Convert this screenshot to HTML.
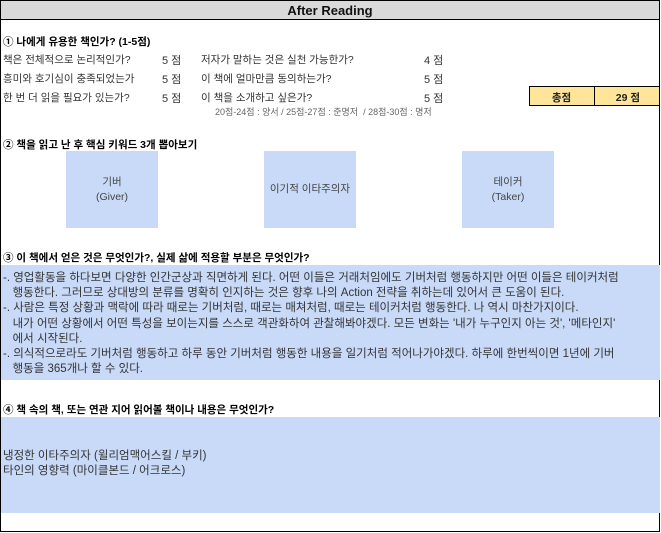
<!DOCTYPE html>
<html><head><meta charset="utf-8"><style>
*{margin:0;padding:0;box-sizing:border-box}
body{width:661px;height:533px;background:#fff;font-family:"Liberation Sans","Noto Sans CJK KR",sans-serif;font-size:11px;color:#333;position:relative;overflow:hidden}
.frame{position:absolute;left:0;top:0;width:660px;height:532px;border:1px solid #000}
.title{position:absolute;left:0;top:0;width:660px;height:20px;background:#d9d9d9;border:1px solid #000;text-align:center;font-weight:bold;font-size:13px;line-height:19px;color:#111}
.a{position:absolute;white-space:nowrap}
.h{color:#000;font-weight:bold;font-size:10.5px}
.box{position:absolute;background:#c9daf8;text-align:center;display:flex;align-items:center;justify-content:center;font-size:10.5px;color:#444;line-height:15px}
.band{position:absolute;left:1px;width:659px;background:#c9daf8}
</style></head><body>
<div class="frame"></div>
<div class="title">After Reading</div>
<div class="a h" style="left:3px;top:34px">① 나에게 유용한 책인가? (1-5점)</div>
<div class="a" style="left:3px;top:52px;font-size:10.5px">책은 전체적으로 논리적인가?</div>
<div class="a" style="left:162px;top:52px">5 점</div>
<div class="a" style="left:201px;top:52px;font-size:10.5px">저자가 말하는 것은 실천 가능한가?</div>
<div class="a" style="left:424px;top:52px">4 점</div>
<div class="a" style="left:3px;top:71px;font-size:10.5px">흥미와 호기심이 충족되었는가</div>
<div class="a" style="left:162px;top:71px">5 점</div>
<div class="a" style="left:201px;top:71px;font-size:10.5px">이 책에 얼마만큼 동의하는가?</div>
<div class="a" style="left:424px;top:71px">5 점</div>
<div class="a" style="left:3px;top:90px;font-size:10.5px">한 번 더 읽을 필요가 있는가?</div>
<div class="a" style="left:162px;top:90px">5 점</div>
<div class="a" style="left:201px;top:90px;font-size:10.5px">이 책을 소개하고 싶은가?</div>
<div class="a" style="left:424px;top:90px">5 점</div>
<div class="a" style="left:215px;top:105px;font-size:9px;color:#666">20점-24점 : 양서 / 25점-27점 : 준명저 &nbsp;/ 28점-30점 : 명저</div>
<div class="a" style="left:529px;top:86px;width:131px;height:20px;background:#ffe599;border:1px solid #000"></div>
<div class="a" style="left:594px;top:86px;width:1px;height:20px;background:#000"></div>
<div class="a" style="left:529px;top:90px;width:65px;text-align:center;font-weight:bold;font-size:10.5px;color:#222">총점</div>
<div class="a" style="left:595px;top:90px;width:45px;text-align:right;font-weight:bold;font-size:10.5px;color:#222">29 점</div>
<div class="a h" style="left:3px;top:137px">② 책을 읽고 난 후 핵심 키워드 3개 뽑아보기</div>
<div class="box" style="left:66px;top:151px;width:92px;height:77px">기버<br>(Giver)</div>
<div class="box" style="left:264px;top:151px;width:92px;height:77px">이기적 이타주의자</div>
<div class="box" style="left:462px;top:151px;width:92px;height:77px">테이커<br>(Taker)</div>
<div class="a h" style="left:3px;top:250px">③ 이 책에서 얻은 것은 무엇인가?, 실제 삶에 적용할 부분은 무엇인가?</div>
<div class="band" style="top:265px;height:115px"></div>
<div class="a" style="left:3px;top:271px;line-height:15.2px;font-size:11.5px">-. 영업활동을 하다보면 다양한 인간군상과 직면하게 된다. 어떤 이들은 거래처임에도 기버처럼 행동하지만 어떤 이들은 테이커처럼<br>&nbsp;&nbsp;&nbsp;행동한다. 그러므로 상대방의 분류를 명확히 인지하는 것은 향후 나의 Action 전략을 취하는데 있어서 큰 도움이 된다.<br>-. 사람은 특정 상황과 맥락에 따라 때로는 기버처럼, 때로는 매쳐처럼, 때로는 테이커처럼 행동한다. 나 역시 마찬가지이다.<br>&nbsp;&nbsp;&nbsp;내가 어떤 상황에서 어떤 특성을 보이는지를 스스로 객관화하여 관찰해봐야겠다. 모든 변화는 '내가 누구인지 아는 것', '메타인지'<br>&nbsp;&nbsp;&nbsp;에서 시작된다.<br>-. 의식적으로라도 기버처럼 행동하고 하루 동안 기버처럼 행동한 내용을 일기처럼 적어나가야겠다. 하루에 한번씩이면 1년에 기버<br>&nbsp;&nbsp;&nbsp;행동을 365개나 할 수 있다.</div>
<div class="a h" style="left:3px;top:402px">④ 책 속의 책, 또는 연관 지어 읽어볼 책이나 내용은 무엇인가?</div>
<div class="band" style="top:417px;height:96px"></div>
<div class="a" style="left:3px;top:449px;line-height:15px;font-size:11.5px">냉정한 이타주의자 (윌리엄맥어스킬 / 부키)<br>타인의 영향력 (마이클본드 / 어크로스)</div>
</body></html>
